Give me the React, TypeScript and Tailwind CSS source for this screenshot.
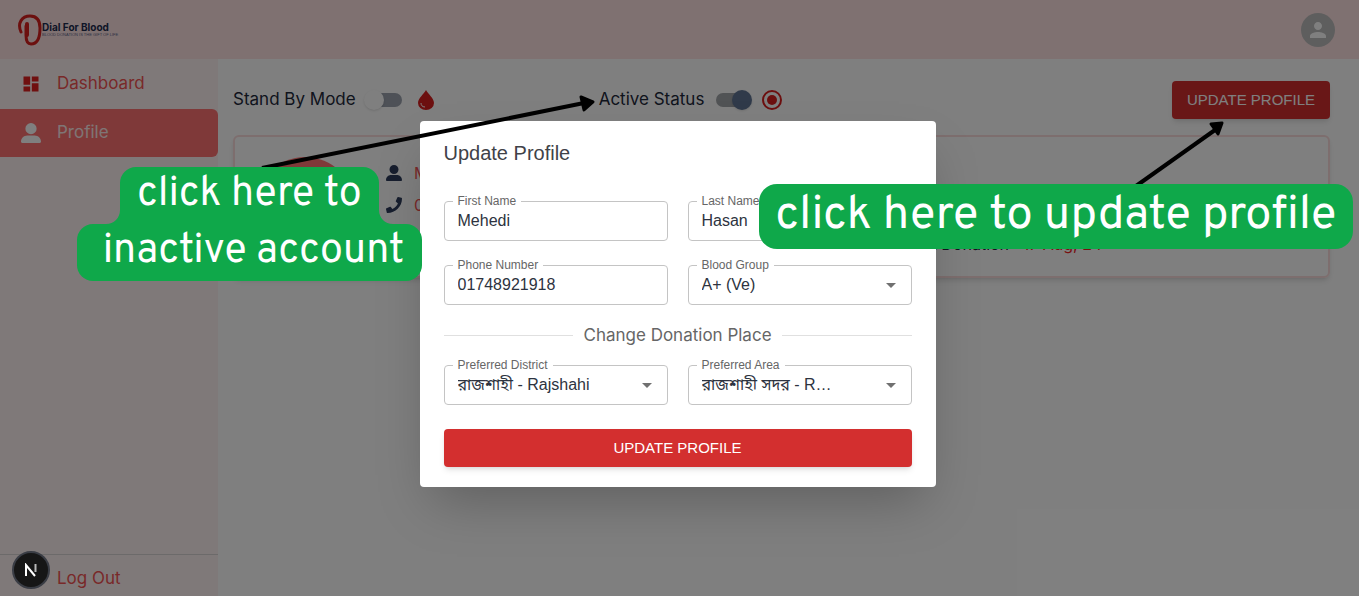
import React, { useState } from 'react';
import { FaPhone } from 'react-icons/fa';
import { FaUserLarge } from 'react-icons/fa6';
import { MdArrowDropDown, MdDashboard, MdPerson } from 'react-icons/md';

function Logo() {
  return (
    <a href="#home" className="flex items-center">
      <svg viewBox="0 0 24 32" className="w-6 h-8" fill="none" stroke="#d9201f" strokeLinecap="round">
        <path d="M3 18C-1 9 4 2 12 2c7 0 10 4 10 12 0 10-3 16-9 16-4 0-5-4-5-9v-9" strokeWidth="3" />
        <path d="M9 10v11" strokeWidth="4" />
      </svg>
      <span className="flex flex-col font-['Inter','Noto_Sans',sans-serif]">
        <span className="text-[10px] leading-[10px] font-bold text-[#1d2b4f] whitespace-nowrap">Dial For Blood</span>
        <span className="text-[4px] leading-[6px] text-[#5d678a] whitespace-nowrap font-['Liberation_Sans',Arial,sans-serif]">
          BLOOD DONATION IS THE GIFT OF LIFE
        </span>
      </span>
    </a>
  );
}

function Header() {
  return (
    <header className="h-[59px] shrink-0 pl-[18px] pr-6 flex items-center justify-between bg-red-100">
      <Logo />
      <button type="button" aria-label="Account" className="w-[34px] h-[34px] rounded-full bg-[#bdbdbd] text-white flex items-center justify-center">
        <MdPerson className="w-6 h-6" />
      </button>
    </header>
  );
}

function Sidebar() {
  return (
    <nav className="w-[218px] shrink-0 flex flex-col bg-[#fff3f3] text-[17px] text-[#f25252]">
      <a href="#dashboard" className="h-[50px] pl-[21px] flex items-center gap-4">
        <MdDashboard className="w-5 h-5 text-[#e02020]" />
        Dashboard
      </a>
      <a href="#profile" className="h-12 pl-[21px] flex items-center gap-4 rounded-r-md bg-[#ff7373] text-[#ffeaea]">
        <FaUserLarge className="w-5 h-5 text-white" />
        Profile
      </a>
      <a href="#logout" className="mt-auto h-[42px] pl-[57px] pt-1.5 flex items-center border-t border-[#d8d4d4]">
        Log Out
      </a>
    </nav>
  );
}

interface SwitchProps {
  label: string;
  checked: boolean;
  onChange: (checked: boolean) => void;
}

function Switch({ label, checked, onChange }: SwitchProps) {
  return (
    <label className="flex items-center gap-3 text-[17px] text-[#1e293b] whitespace-nowrap">
      {label}
      <input
        type="checkbox"
        checked={checked}
        onChange={(e) => onChange(e.target.checked)}
        className="appearance-none w-[34px] h-[14px] rounded-full bg-[#9ca3af] flex items-center before:content-[''] before:w-5 before:h-5 before:shrink-0 before:-ml-1 before:rounded-full before:bg-white before:shadow checked:bg-[#a3a6aa] checked:before:ml-4 checked:before:bg-[#607595]"
      />
    </label>
  );
}

function ProfileCard() {
  return (
    <section className="h-[143px] px-5 py-5 flex rounded-md border-2 border-[#fbdcdc] shadow-md">
      <div className="w-[100px] h-[100px] rounded-full bg-[#ff7373]" />
      <ul className="ml-[31px] pt-1 flex flex-col gap-2 text-[16px] leading-6 text-[#f25252]">
        <li className="flex items-center gap-3">
          <FaUserLarge className="w-4 h-4 text-[#2f3d5c]" />
          Mehedi Hasan
        </li>
        <li className="flex items-center gap-3">
          <FaPhone className="w-4 h-4 text-[#2f3d5c]" />
          01748921918
        </li>
      </ul>
      <p className="ml-auto mr-[206px] self-end text-[16px] leading-6 text-[#1e293b]">
        Last Donation : <span className="text-[#f02020]">17 Aug, 24</span>
      </p>
    </section>
  );
}

interface FieldProps {
  id: string;
  label: string;
  children: React.ReactNode;
}

function Field({ id, label, children }: FieldProps) {
  return (
    <div className="relative min-w-0">
      <label htmlFor={id} className="absolute left-[9px] -top-2 px-[5px] bg-white text-[12px] leading-4 text-[#666666]">
        {label}
      </label>
      {children}
    </div>
  );
}

const controlClass =
  'w-full h-10 px-[13px] rounded border border-[#c4c4c4] bg-transparent text-[16px] text-[#2d3340] outline-none';

function TextField({ id, label, value }: { id: string; label: string; value: string }) {
  return (
    <Field id={id} label={label}>
      <input id={id} type="text" defaultValue={value} className={controlClass} />
    </Field>
  );
}

function SelectField({ id, label, value }: { id: string; label: string; value: string }) {
  return (
    <Field id={id} label={label}>
      <select id={id} defaultValue={value} className={`${controlClass} appearance-none pr-[72px] truncate`}>
        <option value={value}>{value}</option>
      </select>
      <MdArrowDropDown className="absolute right-[9px] top-2 w-6 h-6 text-[#707070] pointer-events-none" />
    </Field>
  );
}

const redButton =
  "rounded bg-[#d32f2f] text-white text-[15px] font-medium font-['Liberation_Sans',Arial,sans-serif] shadow-md";

function UpdateProfileDialog() {
  return (
    <form
      role="dialog"
      aria-label="Update Profile"
      onSubmit={(e) => e.preventDefault()}
      className="w-[516px] mt-3 px-6 pt-4 pb-5 rounded bg-white shadow-2xl font-['Liberation_Sans',Arial,'Noto_Sans_Bengali',sans-serif]"
    >
      <h2 className="text-[20px] leading-8 text-[#3f4248]">Update Profile</h2>
      <div className="mt-8 grid grid-cols-2 gap-x-5 gap-y-6">
        <TextField id="first-name" label="First Name" value="Mehedi" />
        <TextField id="last-name" label="Last Name" value="Hasan" />
        <TextField id="phone" label="Phone Number" value="01748921918" />
        <SelectField id="blood-group" label="Blood Group" value="A+ (Ve)" />
      </div>
      <div className="my-5 flex items-center gap-[10px] font-['Inter','Noto_Sans',sans-serif] text-[17px] leading-5 text-[#666666] before:content-[''] before:flex-1 before:border-t before:border-[#e0e0e0] after:content-[''] after:flex-1 after:border-t after:border-[#e0e0e0]">
        Change Donation Place
      </div>
      <div className="grid grid-cols-2 gap-x-5">
        <SelectField id="district" label="Preferred District" value="রাজশাহী - Rajshahi" />
        <SelectField id="area" label="Preferred Area" value="রাজশাহী সদর - Rajshahi Sadar" />
      </div>
      <button type="submit" className={`${redButton} mt-6 w-full h-[38px]`}>
        UPDATE PROFILE
      </button>
    </form>
  );
}

function Callouts() {
  return (
    <div className="absolute inset-0 pointer-events-none font-['Overpass','Noto_Sans',sans-serif] text-white">
      <svg className="absolute left-0 top-0 w-full h-full" fill="#000" stroke="#000" strokeLinejoin="round">
        <path d="M262 168L584 103" strokeWidth="4" />
        <path d="M581 97l12 5-9 8z" strokeWidth="3" />
        <path d="M1136 186L1215 130" strokeWidth="4" />
        <path d="M1211 124l11-1-4 11z" strokeWidth="3" />
      </svg>
      <div className="absolute left-[77px] top-[167px] w-[345px] flex flex-col items-center text-[41px] leading-[56px] whitespace-nowrap">
        <div className="relative w-[259px] h-[57px] rounded-t-2xl bg-[#0fa84a] text-center">
          click here to
          <svg viewBox="0 0 14 14" className="absolute -left-[14px] bottom-0 w-[14px] h-[14px]" fill="#0fa84a">
            <path d="M14 0v14H0C8 14 14 8 14 0z" />
          </svg>
          <svg viewBox="0 0 14 14" className="absolute -right-[14px] bottom-0 w-[14px] h-[14px]" fill="#0fa84a">
            <path d="M0 0v14h14C6 14 0 8 0 0z" />
          </svg>
        </div>
        <div className="w-full h-[57px] pl-2 rounded-2xl bg-[#0fa84a] text-center">inactive account</div>
      </div>
      <div className="absolute left-[759px] top-[184px] w-[594px] h-[65px] rounded-[18px] bg-[#0fa84a] text-center text-[47px] leading-[64px] whitespace-nowrap">
        click here to update profile
      </div>
    </div>
  );
}

export default function App() {
  const [standBy, setStandBy] = useState(false);
  const [active, setActive] = useState(true);

  return (
    <div className="relative min-h-screen flex flex-col overflow-hidden bg-white font-['Inter','Noto_Sans',sans-serif]">
      <Header />
      <div className="flex-1 flex">
        <Sidebar />
        <main className="flex-1 min-w-0 pl-[15px] pr-[29px] pt-[21px]">
          <div className="h-10 grid grid-cols-3 items-center">
            <div className="flex items-center gap-4">
              <Switch label="Stand By Mode" checked={standBy} onChange={setStandBy} />
              <svg viewBox="0 0 16 20" className="w-4 h-5">
                <path d="M8 0c2 4 8 8 8 13a8 7 0 0 1-16 0C0 8 6 4 8 0z" fill="#d91f1f" />
                <path d="M3 13c0 2 1 4 4 4" fill="none" stroke="#fff" strokeWidth="1" />
              </svg>
            </div>
            <div className="flex items-center gap-3">
              <Switch label="Active Status" checked={active} onChange={setActive} />
              <svg viewBox="0 0 20 20" className="w-5 h-5">
                <circle cx="10" cy="10" r="9" fill="none" stroke="#d91f1f" strokeWidth="2" />
                <circle cx="10" cy="10" r="5" fill="#d91f1f" />
              </svg>
            </div>
            <button type="button" className={`${redButton} justify-self-end w-[158px] h-[38px]`}>
              UPDATE PROFILE
            </button>
          </div>
          <div className="mt-[15px]">
            <ProfileCard />
          </div>
        </main>
      </div>
      <div className="absolute inset-0 pr-1 flex items-center justify-center bg-black/50">
        <UpdateProfileDialog />
      </div>
      <button
        type="button"
        aria-label="Next.js tools"
        className="absolute left-3 bottom-[7px] w-[38px] h-[38px] rounded-full border-2 border-[#3a3d45] bg-[#161616] flex items-center justify-center"
      >
        <svg viewBox="0 0 14 14" className="w-[14px] h-[14px]" fill="none" stroke="#fff" strokeWidth="2">
          <path d="M2 13V2l9 11" />
          <path d="M11.500 1v8" strokeOpacity="0.7" />
        </svg>
      </button>
      <Callouts />
    </div>
  );
}
